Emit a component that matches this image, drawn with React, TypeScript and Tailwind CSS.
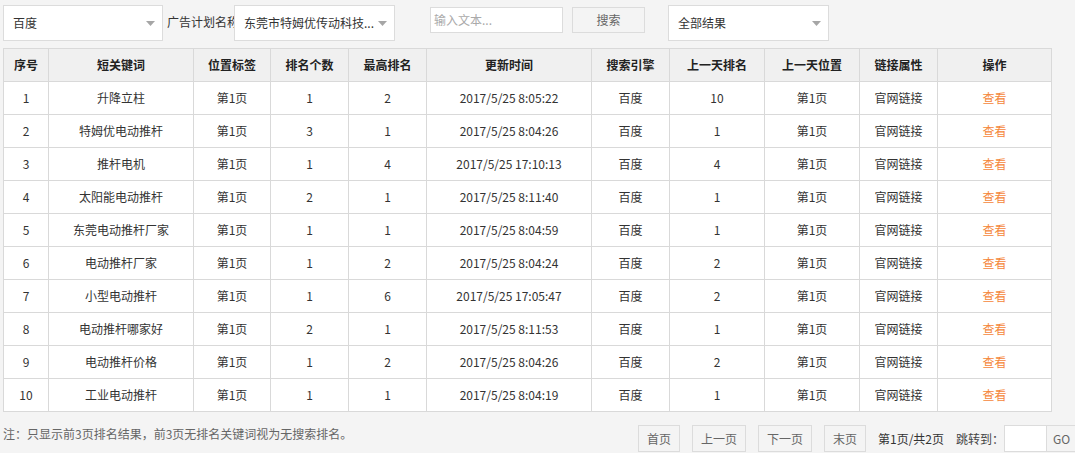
import React from "react";

const rows = [
  ["1", "升降立柱", "第1页", "1", "2", "2017/5/25 8:05:22", "百度", "10", "第1页", "官网链接"],
  ["2", "特姆优电动推杆", "第1页", "3", "1", "2017/5/25 8:04:26", "百度", "1", "第1页", "官网链接"],
  ["3", "推杆电机", "第1页", "1", "4", "2017/5/25 17:10:13", "百度", "4", "第1页", "官网链接"],
  ["4", "太阳能电动推杆", "第1页", "2", "1", "2017/5/25 8:11:40", "百度", "1", "第1页", "官网链接"],
  ["5", "东莞电动推杆厂家", "第1页", "1", "1", "2017/5/25 8:04:59", "百度", "1", "第1页", "官网链接"],
  ["6", "电动推杆厂家", "第1页", "1", "2", "2017/5/25 8:04:24", "百度", "2", "第1页", "官网链接"],
  ["7", "小型电动推杆", "第1页", "1", "6", "2017/5/25 17:05:47", "百度", "2", "第1页", "官网链接"],
  ["8", "电动推杆哪家好", "第1页", "2", "1", "2017/5/25 8:11:53", "百度", "1", "第1页", "官网链接"],
  ["9", "电动推杆价格", "第1页", "1", "2", "2017/5/25 8:04:26", "百度", "2", "第1页", "官网链接"],
  ["10", "工业电动推杆", "第1页", "1", "1", "2017/5/25 8:04:19", "百度", "1", "第1页", "官网链接"],
];

const headers = ["序号", "短关键词", "位置标签", "排名个数", "最高排名", "更新时间", "搜索引擎", "上一天排名", "上一天位置", "链接属性", "操作"];
const widths = [45, 145, 77, 78, 78, 165, 78, 95, 95, 78, 114];

function Arrow() {
  return (
    <svg width="9" height="5" viewBox="0 0 9 5" className="shrink-0">
      <path d="M0 0 L9 0 L4.5 5 Z" fill="#a6a6a6" />
    </svg>
  );
}

function Select({ text, width }: { text: string; width: string }) {
  return (
    <div className={`${width} h-[36px] bg-white border border-[#dcdcdc] flex items-center justify-between pl-[9px] pr-[7px] shrink-0`}>
      <span className="text-[12px] text-[#333] whitespace-nowrap leading-none">{text}</span>
      <Arrow />
    </div>
  );
}

export default function App() {
  return (
    <div
      className="w-[1075px] h-[453px] bg-[#f4f4f4] overflow-hidden text-[12px] text-[#333]"
      style={{ fontFamily: '"Noto Sans CJK SC", "Noto Sans", sans-serif' }}
    >
      <div className="flex items-start pt-[5px] pl-[3px]">
        <Select text="百度" width="w-[160px]" />
        <div className="ml-[4px] w-[67px] overflow-hidden whitespace-nowrap mt-[9px] leading-[16px]">广告计划名称</div>
        <Select text="东莞市特姆优传动科技..." width="w-[161px]" />
        <div className="ml-[35px] mt-[2px] w-[133px] h-[26px] bg-white border border-[#dcdcdc] flex items-center pl-[3px] text-[#aaa]">
          输入文本...
        </div>
        <div className="ml-[9px] mt-[2px] w-[73px] h-[26px] border border-[#dcdcdc] flex items-center justify-center text-[#666]">
          搜索
        </div>
        <div className="ml-[23px]">
          <Select text="全部结果" width="w-[161px]" />
        </div>
      </div>

      <table className="mt-[7px] ml-[3px] w-[1048px] table-fixed border-collapse">
        <colgroup>
          {widths.map((w, i) => (
            <col key={i} style={{ width: w }} />
          ))}
        </colgroup>
        <thead>
          <tr className="bg-[#f0f0f0]">
            {headers.map((h) => (
              <th key={h} className="h-[33px] border border-[#d9d9d9] font-bold text-center p-0 text-[#222]">
                {h}
              </th>
            ))}
          </tr>
        </thead>
        <tbody className="bg-white">
          {rows.map((r) => (
            <tr key={r[0]}>
              {r.map((c, i) => (
                <td key={i} className="h-[33px] border border-[#d9d9d9] text-center p-0 whitespace-nowrap">
                  {c}
                </td>
              ))}
              <td className="h-[33px] border border-[#d9d9d9] text-center p-0 text-[#f5873a]">查看</td>
            </tr>
          ))}
        </tbody>
      </table>

      <div className="flex items-start mt-[13px]">
        <div className="pl-[3px] mt-[1px] text-[#666] leading-[16px] w-[638px] shrink-0">
          注：只显示前3页排名结果，前3页无排名关键词视为无搜索排名。
        </div>
        <div className="flex items-center">
          <div className="w-[42px] h-[27px] border border-[#dcdcdc] flex items-center justify-center text-[#666]">首页</div>
          <div className="ml-[12px] w-[54px] h-[27px] border border-[#dcdcdc] flex items-center justify-center text-[#666]">上一页</div>
          <div className="ml-[12px] w-[54px] h-[27px] border border-[#dcdcdc] flex items-center justify-center text-[#666]">下一页</div>
          <div className="ml-[12px] w-[42px] h-[27px] border border-[#dcdcdc] flex items-center justify-center text-[#666]">末页</div>
          <div className="ml-[12px] whitespace-nowrap">第1页/共2页</div>
          <div className="ml-[12px] whitespace-nowrap text-[#444]">跳转到：</div>
          <div className="w-[43px] h-[27px] bg-white border border-[#dcdcdc] shrink-0"></div>
          <div className="w-[30px] h-[27px] border border-l-0 border-[#dcdcdc] flex items-center justify-center text-[#666] shrink-0">GO</div>
        </div>
      </div>
    </div>
  );
}
